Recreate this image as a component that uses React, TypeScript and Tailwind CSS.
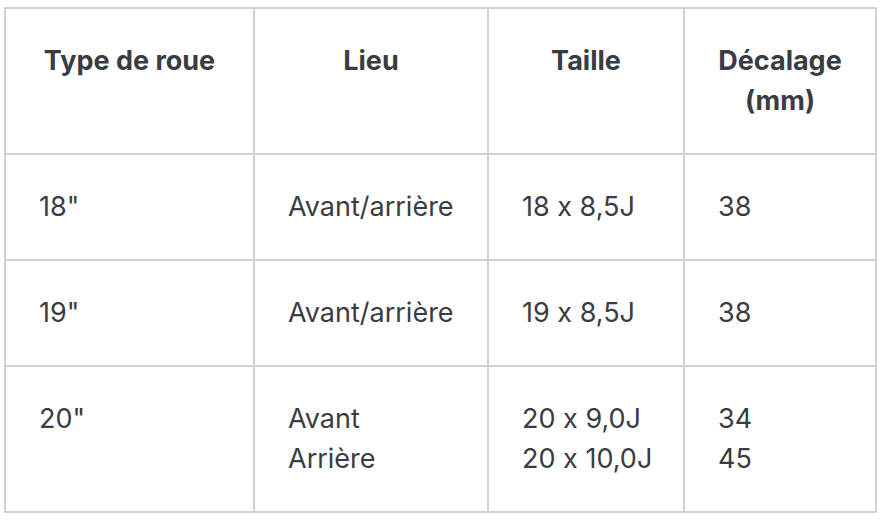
const rows = [
  { type: '18"', lieu: ["Avant/arrière"], taille: ["18 x 8,5J"], offset: ["38"] },
  { type: '19"', lieu: ["Avant/arrière"], taille: ["19 x 8,5J"], offset: ["38"] },
  { type: '20"', lieu: ["Avant", "Arrière"], taille: ["20 x 9,0J", "20 x 10,0J"], offset: ["34", "45"] },
];

function Lines({ items }: { items: string[] }) {
  return (
    <>
      {items.map((t) => (
        <div key={t} className="whitespace-nowrap">
          {t}
        </div>
      ))}
    </>
  );
}

export default function App() {
  return (
    <div className="min-h-screen bg-white pl-[4px] pt-[7px] font-['Inter',sans-serif] text-[#393c41] [font-feature-settings:'calt'_0]">
      <table className="w-[871px] table-fixed border-collapse border-2 border-[#d0d1d2] text-[27px] leading-[40px]">
        <colgroup>
          <col className="w-[249px]" />
          <col className="w-[234px]" />
          <col className="w-[196px]" />
          <col className="w-[192px]" />
        </colgroup>
        <thead>
          <tr className="font-bold">
            <th className="border-2 border-[#d0d1d2] px-[30px] py-[32px] text-center align-top">Type de roue</th>
            <th className="border-2 border-[#d0d1d2] px-[30px] py-[32px] text-center align-top">Lieu</th>
            <th className="border-2 border-[#d0d1d2] px-[30px] py-[32px] text-center align-top">Taille</th>
            <th className="border-2 border-[#d0d1d2] px-[30px] py-[32px] text-center align-top">Décalage (mm)</th>
          </tr>
        </thead>
        <tbody>
          {rows.map((r) => (
            <tr key={r.type}>
              <td className="border-2 border-[#d0d1d2] pl-[33px] pr-[28px] py-[32px] align-top">{r.type}</td>
              <td className="border-2 border-[#d0d1d2] pl-[33px] pr-[28px] py-[32px] align-top">
                <Lines items={r.lieu} />
              </td>
              <td className="border-2 border-[#d0d1d2] pl-[33px] pr-[28px] py-[32px] align-top">
                <Lines items={r.taille} />
              </td>
              <td className="border-2 border-[#d0d1d2] pl-[33px] pr-[28px] py-[32px] align-top">
                <Lines items={r.offset} />
              </td>
            </tr>
          ))}
        </tbody>
      </table>
    </div>
  );
}
